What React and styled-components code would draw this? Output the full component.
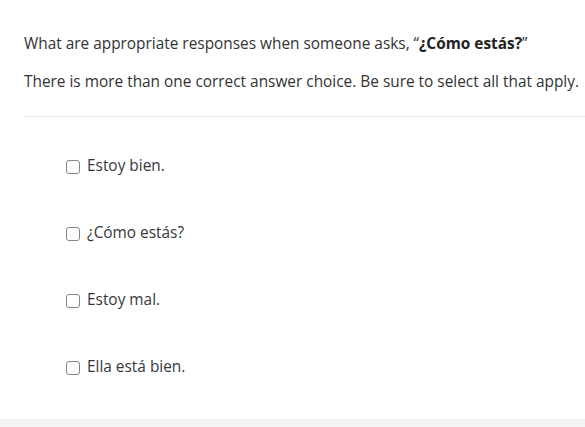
import React from 'react'
import styled, { createGlobalStyle } from 'styled-components'

const GlobalStyle = createGlobalStyle`
  html, body {
    margin: 0;
    padding: 0;
    background: #ffffff;
  }
  body {
    font-family: "Open Sans", "Liberation Sans", sans-serif;
    color: #333333;
  }
`

const options = ['Estoy bien.', '¿Cómo estás?', 'Estoy mal.', 'Ella está bien.']

const App = () => {
  return (
    <Page>
      <GlobalStyle />
      <Question>
        <Prompt>
          What are appropriate responses when someone asks, “<strong>¿Cómo estás?</strong>”
        </Prompt>
        <Hint>There is more than one correct answer choice. Be sure to select all that apply.</Hint>
      </Question>
      <Divider />
      <Choices>
        {options.map((option, index) => (
          <Choice key={`${index}`}>
            <Box type="checkbox" />
            <Label>{option}</Label>
          </Choice>
        ))}
      </Choices>
      <Footer />
    </Page>
  )
}

const Page = styled.div`
  display: flex;
  flex-direction: column;
  height: 427px;
  overflow: hidden;
`

const Question = styled.div`
  display: flex;
  flex-direction: column;
  gap: 16px;
  padding: 33px 0 0 24px;
  font-size: 15.4px;
  line-height: 22px;
  white-space: nowrap;
`

const Prompt = styled.p`
  margin: 0;

  strong {
    font-weight: 700;
    color: #222;
  }
`

const Hint = styled.p`
  margin: 0;
`

const Divider = styled.hr`
  border: none;
  border-top: 1px solid #e8e8e8;
  margin: 23px 0 0 24px;
`

const Choices = styled.div`
  display: flex;
  flex-direction: column;
  gap: 45px;
  padding: 38px 0 0 66px;
  flex: 1;
`

const Choice = styled.label`
  display: flex;
  align-items: center;
  gap: 7px;
  font-size: 15.4px;
  line-height: 22px;
`

const Box = styled.input`
  appearance: none;
  margin: 1px 0 0 0;
  width: 14px;
  height: 14px;
  border: 1px solid #858585;
  border-radius: 3px;
  background: #fff;
  box-sizing: border-box;
`

const Label = styled.span`
  color: #383838;
`

const Footer = styled.div`
  height: 7px;
  background: #f4f4f4;
  border-top: 1px solid #efefef;
`

export default App
